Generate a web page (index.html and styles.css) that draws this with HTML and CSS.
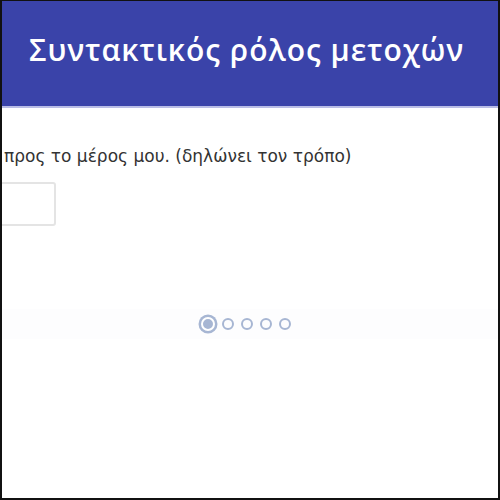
FILE: index.html
```html
<html>
  <head>
    <link rel="stylesheet" href="styles.css">
  </head>
  <body>
    <div class="frame">
      <header class="topbar">
        <h1>Συντακτικός ρόλος μετοχών</h1>
      </header>
      <div class="slide">
        <p class="sentence">προς το μέρος μου. (δηλώνει τον τρόπο)</p>
        <input class="answer" type="text">
      </div>
      <div class="pager">
        <span class="dot active"></span>
        <span class="dot"></span>
        <span class="dot"></span>
        <span class="dot"></span>
        <span class="dot"></span>
      </div>
    </div>
  </body>
</html>
```

FILE: styles.css
```css
html, body {
  margin: 0;
  height: 100%;
}
body {
  font-family: "DejaVu Sans", Verdana, sans-serif;
  background: #fff;
}
.frame {
  box-sizing: border-box;
  height: 500px;
  border: 2px solid #111;
  border-top-width: 1px;
  overflow: hidden;
  display: flex;
  flex-direction: column;
}
.topbar {
  height: 105px;
  background: #3a43a9;
  border-bottom: 2px solid #b9bde6;
  display: flex;
  align-items: center;
  padding-left: 27px;
}
.topbar h1 {
  margin: 0 0 8px 0;
  color: #fff;
  font-family: "Open Sans", Arial, sans-serif;
  font-size: 30px;
  font-weight: 600;
  letter-spacing: 1px;
}
.slide {
  padding: 38px 0 0 2px;
}
.sentence {
  margin: 0;
  font-size: 17px;
  color: #333;
}
.answer {
  display: block;
  margin: 16px 0 0 -30px;
  width: 82px;
  height: 44px;
  box-sizing: border-box;
  border: 2px solid #e4e4e4;
  border-radius: 3px;
}
.pager {
  margin-top: 83px;
  display: flex;
  justify-content: center;
  align-items: center;
  gap: 7px;
  padding: 8px 0 8px 0;
  margin-left: -8px;
  background: #fdfdfe;
}
.dot {
  width: 8px;
  height: 8px;
  border: 2.5px solid #a7b6d3;
  border-radius: 50%;
}
.dot.active {
  width: 10px;
  height: 10px;
  background: #a7b6d3;
  border: 2px solid #fff;
  box-shadow: 0 0 0 2.5px #a7b6d3;
}
```
